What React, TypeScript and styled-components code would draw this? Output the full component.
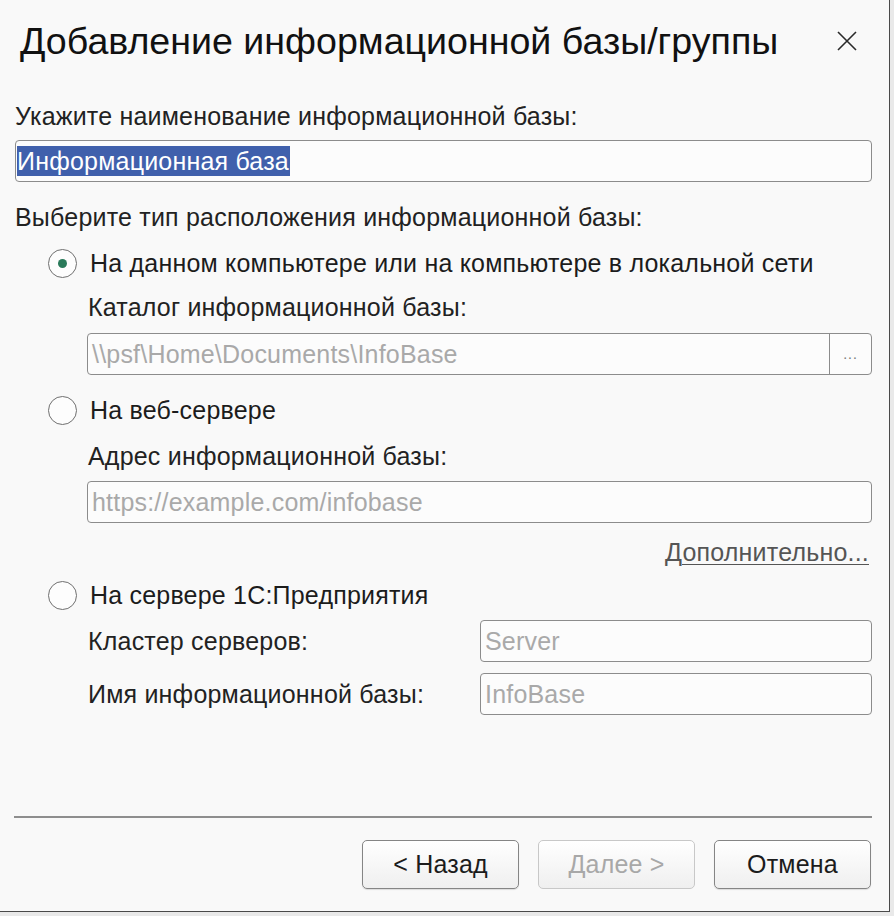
import React from "react";
import styled, { createGlobalStyle } from "styled-components";

const GlobalStyle = createGlobalStyle`
  html, body {
    margin: 0;
    padding: 0;
    background: #e9e9e9;
  }
  body {
    font-family: "Liberation Sans", Arial, sans-serif;
    color: #1c1c1c;
  }
`;

const Window = styled.div`
  width: 890px;
  height: 912px;
  box-sizing: border-box;
  background: #f9f9f9;
  border-right: 1px solid #4a4a4a;
  border-bottom: 1px solid #4a4a4a;
  display: flex;
  flex-direction: column;
  padding: 0 17px 0 15px;
  font-size: 25px;
  letter-spacing: 0.2px;
`;

const Header = styled.div`
  display: flex;
  align-items: center;
  justify-content: space-between;
  height: 82px;
  padding-left: 5px;
`;

const Title = styled.h1`
  margin: 0;
  font-size: 37.6px;
  font-weight: 400;
  letter-spacing: 0;
  color: #111;
  line-height: 40px;
`;

const CloseButton = styled.button`
  border: none;
  background: none;
  padding: 0;
  margin-right: 14px;
  width: 22px;
  height: 22px;
  display: flex;
  align-items: center;
  justify-content: center;
`;

const Label = styled.div<{ $indent?: boolean; $top: number }>`
  line-height: 28px;
  color: #222;
  margin-top: ${p => p.$top}px;
  margin-left: ${p => (p.$indent ? 73 : 0)}px;
`;

const Field = styled.div<{ $indent?: boolean; $top: number }>`
  display: flex;
  height: 42px;
  box-sizing: border-box;
  border: 1px solid #8c8c8c;
  border-radius: 4px;
  background: #fcfcfc;
  margin-top: ${p => p.$top}px;
  margin-left: ${p => (p.$indent ? 72 : 0)}px;
  overflow: hidden;
`;

const FieldText = styled.div<{ $placeholder?: boolean; $tight?: boolean }>`
  flex: 1;
  display: flex;
  align-items: center;
  padding-left: ${p => (p.$tight ? 1 : 4)}px;
  color: ${p => (p.$placeholder ? "#a9a9a9" : "#222")};
  white-space: nowrap;
`;

const Selected = styled.span`
  background: #4060ac;
  color: #fff;
  line-height: 30px;
  padding: 0 1px 0 0;
`;

const PickButton = styled.div`
  width: 41px;
  border-left: 1px solid #8c8c8c;
  display: flex;
  align-items: center;
  justify-content: center;
  font-size: 14px;
  color: #777;
  letter-spacing: 1px;
`;

const RadioRow = styled.label<{ $top: number }>`
  display: flex;
  align-items: center;
  gap: 13px;
  margin-top: ${p => p.$top}px;
  margin-left: 33px;
  line-height: 30px;
  color: #1c1c1c;
`;

const RadioCircle = styled.span<{ $checked?: boolean }>`
  width: 29px;
  height: 29px;
  flex-shrink: 0;
  box-sizing: border-box;
  border-radius: 50%;
  border: 1.5px solid #6f6f6f;
  background: #fdfdfd;
  display: flex;
  align-items: center;
  justify-content: center;
  &::after {
    content: "";
    width: 9px;
    height: 9px;
    border-radius: 50%;
    background: ${p => (p.$checked ? "#2a7a5a" : "transparent")};
  }
`;

const MoreLink = styled.a`
  align-self: flex-end;
  margin-top: 15px;
  margin-right: 3px;
  line-height: 28px;
  color: #555;
  text-decoration: underline;
  text-underline-offset: 3px;
  text-decoration-thickness: 1px;
`;

const ServerGrid = styled.div`
  display: grid;
  grid-template-columns: 392px 1fr;
  row-gap: 11px;
  margin-top: 10px;
  margin-left: 73px;
  align-items: center;
`;

const GridLabel = styled.div`
  line-height: 28px;
  color: #222;
`;

const GridField = styled(Field)`
  margin: 0;
`;

const Spacer = styled.div`
  flex: 1;
`;

const Separator = styled.div`
  height: 2px;
  background: #8e8e8e;
  margin: 0 0 0 -1px;
`;

const Footer = styled.div`
  display: flex;
  justify-content: flex-end;
  gap: 19px;
  padding: 22px 1px 22px 0;
`;

const Button = styled.button<{ $disabled?: boolean }>`
  width: 157px;
  height: 49px;
  border-radius: 5px;
  border: 1px solid ${p => (p.$disabled ? "#c8c8c8" : "#858585")};
  background: linear-gradient(#ffffff, #efefef);
  font-family: "Liberation Sans", Arial, sans-serif;
  font-size: 25px;
  letter-spacing: 0.2px;
  color: ${p => (p.$disabled ? "#a8a8a8" : "#1c1c1c")};
  box-shadow: ${p => (p.$disabled ? "none" : "0 1px 1px rgba(0,0,0,0.12)")};
`;

const CloseIcon = () => (
  <svg width="20" height="20" viewBox="0 0 20 20">
    <path d="M1 1 L19 19 M19 1 L1 19" stroke="#2a2a2a" strokeWidth="1.6" fill="none" />
  </svg>
);

export default function App() {
  return (
    <>
      <GlobalStyle />
      <Window>
        <Header>
          <Title>Добавление информационной базы/группы</Title>
          <CloseButton><CloseIcon /></CloseButton>
        </Header>

        <Label $top={20}>Укажите наименование информационной базы:</Label>
        <Field $top={10}>
          <FieldText $tight><Selected>Информационная база</Selected></FieldText>
        </Field>

        <Label $top={21}>Выберите тип расположения информационной базы:</Label>

        <RadioRow $top={17}>
          <RadioCircle $checked />
          На данном компьютере или на компьютере в локальной сети
        </RadioRow>
        <Label $indent $top={15}>Каталог информационной базы:</Label>
        <Field $indent $top={12}>
          <FieldText $placeholder>\\psf\Home\Documents\InfoBase</FieldText>
          <PickButton>...</PickButton>
        </Field>

        <RadioRow $top={20}>
          <RadioCircle />
          На веб-сервере
        </RadioRow>
        <Label $indent $top={17}>Адрес информационной базы:</Label>
        <Field $indent $top={11}>
          <FieldText $placeholder>https://example.com/infobase</FieldText>
        </Field>
        <MoreLink>Дополнительно...</MoreLink>

        <RadioRow $top={14}>
          <RadioCircle />
          На сервере 1С:Предприятия
        </RadioRow>
        <ServerGrid>
          <GridLabel>Кластер серверов:</GridLabel>
          <GridField $top={0}>
            <FieldText $placeholder>Server</FieldText>
          </GridField>
          <GridLabel>Имя информационной базы:</GridLabel>
          <GridField $top={0}>
            <FieldText $placeholder>InfoBase</FieldText>
          </GridField>
        </ServerGrid>

        <Spacer />
        <Separator />
        <Footer>
          <Button>&lt; Назад</Button>
          <Button $disabled>Далее &gt;</Button>
          <Button>Отмена</Button>
        </Footer>
      </Window>
    </>
  );
}
